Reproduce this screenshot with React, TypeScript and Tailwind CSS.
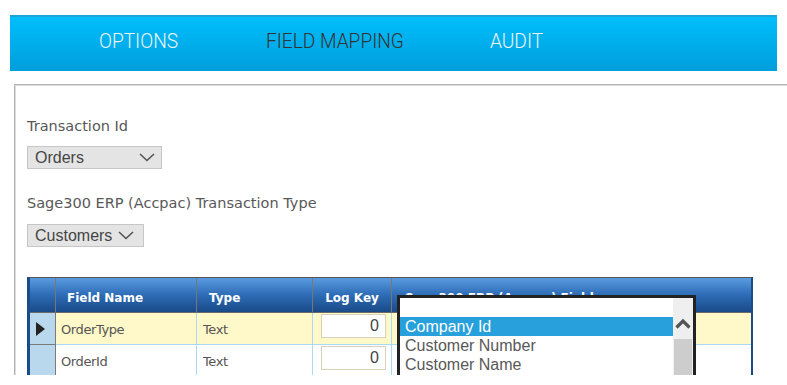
import React from "react";

const Chevron = () => (
  <svg width="16" height="9" viewBox="0 0 16 9" fill="none">
    <polyline points="1,1 8,7.5 15,1" stroke="#555" strokeWidth="1.6" />
  </svg>
);

const SelectBox = ({ label, w, gap }: { label: string; w: string; gap: string }) => (
  <div
    className={`${w} h-[23px] bg-[#e4e4e4] border border-[#c6c6c6] flex items-center pl-[7px] pr-[6px] text-[16px] text-[#444] leading-none`}
    style={{ fontFamily: '"Liberation Sans", Arial, sans-serif' }}
  >
    <span>{label}</span>
    <span className={gap} />
    <Chevron />
  </div>
);

const Tab = ({ w, label, active }: { w: string; label: string; active?: boolean }) => (
  <div className={`${w} shrink-0 whitespace-nowrap`}>
    <span
      className={`inline-block origin-left scale-x-[0.91] ${active ? "text-[#333]" : "text-[#eef3f6]"}`}
    >
      {label}
    </span>
  </div>
);

export default function App() {
  const dv = { fontFamily: '"DejaVu Sans", Verdana, sans-serif' };
  const ar = { fontFamily: '"Liberation Sans", Arial, sans-serif' };
  return (
    <div className="w-[787px] h-[385px] bg-white overflow-hidden">
      <div className="h-[375px] overflow-hidden pt-[15px] flex flex-col">
        <nav
          className="mx-[10px] h-[56px] shrink-0 border-t-2 border-[#1ba4da] bg-gradient-to-b from-[#00befb] to-[#009edc] flex items-center pl-[89px] gap-[87px] pb-[4px] text-[21px] font-light"
          style={{ fontFamily: 'Roboto, "Liberation Sans", sans-serif' }}
        >
          <Tab w="w-[80px]" label="OPTIONS" />
          <Tab w="w-[137px]" label="FIELD MAPPING" active />
          <Tab w="w-[57px]" label="AUDIT" />
        </nav>

        <div className="mt-[13px] ml-[14px] flex-1 border-t border-l border-[#b3b3b3] shadow-[inset_1px_1px_0_#dddddd] pt-[33px] pl-[12px]">
          <div className="text-[14.5px] leading-[17px] text-[#585858]" style={dv}>
            Transaction Id
          </div>
          <div className="mt-[11px]">
            <SelectBox label="Orders" w="w-[135px]" gap="flex-1" />
          </div>
          <div className="mt-[26px] text-[14.5px] leading-[17px] text-[#585858]" style={dv}>
            Sage300 ERP (Accpac) Transaction Type
          </div>
          <div className="mt-[12px]">
            <SelectBox label="Customers" w="w-[117px]" gap="w-[6px]" />
          </div>

          <div className="relative mt-[30px] w-[726px] border-l-[3px] border-r-[2px] border-[#1b4c8a] border-t border-t-[#555]">
            {/* header */}
            <div
              className="grid grid-cols-[26px_141px_116px_79px_1fr] h-[35px] bg-gradient-to-b from-[#5a9be0] via-[#2d6cb6] to-[#1a4a88] border-b border-[#6a6a6a] text-white font-bold text-[12px]"
              style={dv}
            >
              <div className="border-r border-[#777]" />
              <div className="border-r border-[#777] flex items-center pl-[11px] pt-[5px]">Field Name</div>
              <div className="border-r border-[#777] flex items-center pl-[12px] pt-[5px]">Type</div>
              <div className="border-r border-[#777] flex items-center justify-center pt-[5px]">Log Key</div>
              <div className="flex items-center pl-[13px] pt-[5px]">Sage300 ERP (Accpac) Field</div>
            </div>
            {/* rows */}
            {[
              { name: "OrderType", sel: true },
              { name: "OrderId", sel: false },
            ].map((r) => (
              <div
                key={r.name}
                className={`grid grid-cols-[26px_141px_116px_79px_1fr] h-[32px] text-[13px] tracking-[-0.4px] text-[#555] ${
                  r.sel ? "bg-[#fff8c9]" : "bg-white"
                }`}
                style={dv}
              >
                <div className="bg-[#b9d8ee] border-r border-b border-[#7a7a7a] flex items-center pl-[6px]">
                  {r.sel && (
                    <svg width="9" height="14" viewBox="0 0 9 14">
                      <polygon points="0,0 9,7 0,14" fill="#222" />
                    </svg>
                  )}
                </div>
                <div className="border-r border-b border-[#a9d9f3] flex items-center pl-[5px] pt-[2px]">{r.name}</div>
                <div className="border-r border-b border-[#a9d9f3] flex items-center pl-[6px] pt-[2px]">Text</div>
                <div className="border-r border-b border-[#a9d9f3] pl-[8px] pt-[1px]">
                  <div
                    className="w-[65px] h-[24px] bg-white border border-[#d9d2bb] flex items-center justify-end pr-[6px] text-[16px] text-[#444] tracking-normal"
                    style={ar}
                  >
                    0
                  </div>
                </div>
                <div className="border-b border-[#a9d9f3]" />
              </div>
            ))}

            {/* dropdown list overlay */}
            <div
              className="absolute left-[367px] top-[17px] w-[299px] h-[110px] border-[3px] border-[#222] bg-white flex text-[16px] text-[#585858]"
              style={ar}
            >
              <div className="flex-1 flex flex-col">
                <div className="h-[19px]" />
                <div className="h-[19px] bg-[#27a0db] text-white pl-[5px] flex items-center">Company Id</div>
                <div className="h-[19px] pl-[5px] flex items-center">Customer Number</div>
                <div className="h-[19px] pl-[5px] flex items-center">Customer Name</div>
              </div>
              <div className="w-[20px] bg-[#efefef] flex flex-col items-center">
                <svg className="mt-[20px]" width="16" height="11" viewBox="0 0 16 11">
                  <polyline points="1.5,9.5 8,3 14.5,9.5" fill="none" stroke="#555" strokeWidth="3.2" />
                </svg>
                <div className="mt-[10px] w-[18px] flex-1 bg-[#cdcdcd]" />
              </div>
            </div>
          </div>
        </div>
      </div>
    </div>
  );
}
